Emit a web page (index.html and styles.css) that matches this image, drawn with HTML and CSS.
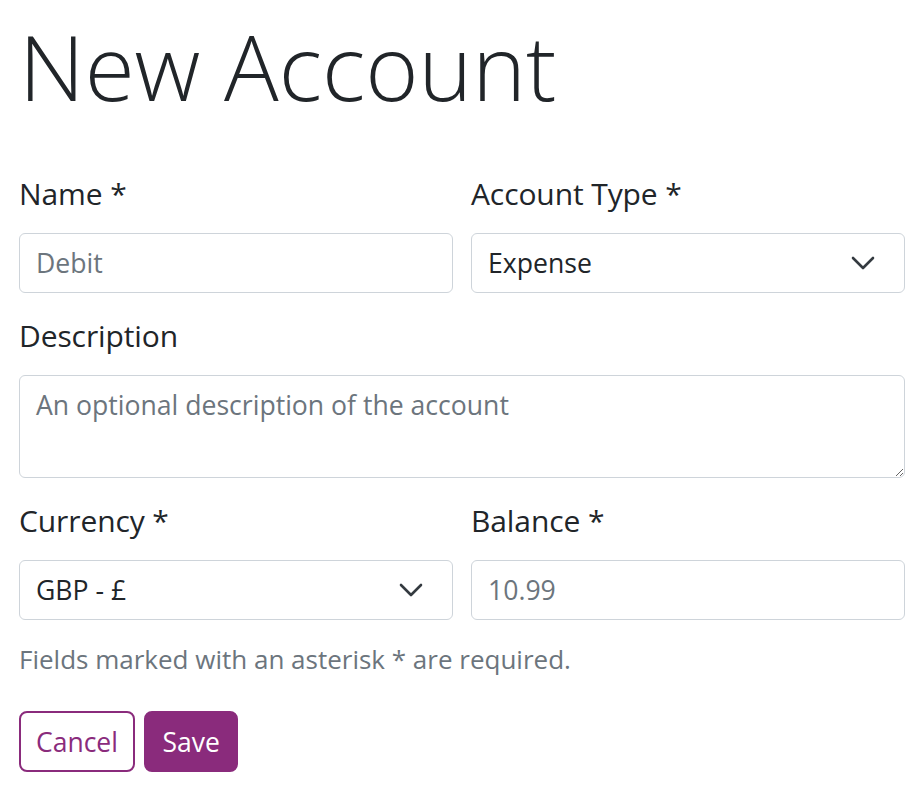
FILE: index.html
```html
<!DOCTYPE html>
<html lang="en">
<head>
<meta charset="utf-8">
<title>New Account</title>
<link rel="stylesheet" href="styles.css">
</head>
<body>
<main class="page">
  <h1 class="title">New Account</h1>
  <form class="form">
    <div class="row">
      <div class="field">
        <label class="label" for="name">Name *</label>
        <input class="control" id="name" type="text" placeholder="Debit">
      </div>
      <div class="field">
        <label class="label">Account Type *</label>
        <div class="control select">
          <span>Expense</span>
          <svg class="chev" width="24" height="14" viewBox="0 0 24 14"><path d="M2 2 L12 12 L22 2" fill="none" stroke="#343a40" stroke-width="2.6" stroke-linecap="round" stroke-linejoin="round"/></svg>
        </div>
      </div>
    </div>
    <div class="field">
      <label class="label" for="desc">Description</label>
      <textarea class="control textarea" id="desc" placeholder="An optional description of the account"></textarea>
    </div>
    <div class="row">
      <div class="field">
        <label class="label">Currency *</label>
        <div class="control select">
          <span>GBP - £</span>
          <svg class="chev" width="24" height="14" viewBox="0 0 24 14"><path d="M2 2 L12 12 L22 2" fill="none" stroke="#343a40" stroke-width="2.6" stroke-linecap="round" stroke-linejoin="round"/></svg>
        </div>
      </div>
      <div class="field">
        <label class="label" for="balance">Balance *</label>
        <input class="control" id="balance" type="text" placeholder="10.99">
      </div>
    </div>
    <p class="help">Fields marked with an asterisk * are required.</p>
    <div class="actions">
      <button type="button" class="btn btn-outline">Cancel</button>
      <button type="button" class="btn btn-primary">Save</button>
    </div>
  </form>
</main>
</body>
</html>
```
FILE: styles.css
```css
html, body {
  margin: 0;
  padding: 0;
  background: #ffffff;
}

body {
  font-family: "Open Sans", "Noto Sans", sans-serif;
  color: #212529;
}

.page {
  padding: 11px 19px 0 19px;
}

.title {
  font-size: 91px;
  font-weight: 300;
  line-height: 110px;
  margin: 0 0 52px 0;
  color: #212529;
}

.form {
  display: flex;
  flex-direction: column;
  gap: 22px;
}

.row {
  display: grid;
  grid-template-columns: 1fr 1fr;
  column-gap: 18px;
}

.field {
  display: flex;
  flex-direction: column;
  min-width: 0;
}

.label {
  font-size: 30px;
  line-height: 42px;
  letter-spacing: -0.1px;
  margin-bottom: 18px;
}

.control {
  box-sizing: border-box;
  width: 100%;
  height: 60px;
  margin: 0;
  border: 1px solid #ced4da;
  border-radius: 6px;
  padding: 0 16px;
  font-family: inherit;
  font-size: 26.6px;
  color: #212529;
  background: #ffffff;
  outline: none;
}

.control::placeholder {
  color: #6c757d;
  opacity: 1;
}

.select {
  display: flex;
  align-items: center;
  justify-content: space-between;
  padding-right: 29px;
}

.chev {
  display: block;
}

.textarea {
  height: 103px;
  padding: 10px 16px;
  line-height: 38px;
  resize: vertical;
}

.help {
  margin: 2px 0 0 0;
  font-size: 26px;
  line-height: 30px;
  color: #6c757d;
}

.actions {
  display: flex;
  gap: 9px;
  margin-top: 15px;
}

.btn {
  box-sizing: border-box;
  height: 61px;
  padding: 0 15px;
  border-radius: 8px;
  font-family: inherit;
  font-size: 26.5px;
  border: 2px solid #8a2b7c;
  cursor: pointer;
}

.btn-outline {
  background: #ffffff;
  color: #8a2b7c;
}

.btn-primary {
  padding: 0 16.5px;
  background: #8a2b7c;
  color: #ffffff;
}
```
